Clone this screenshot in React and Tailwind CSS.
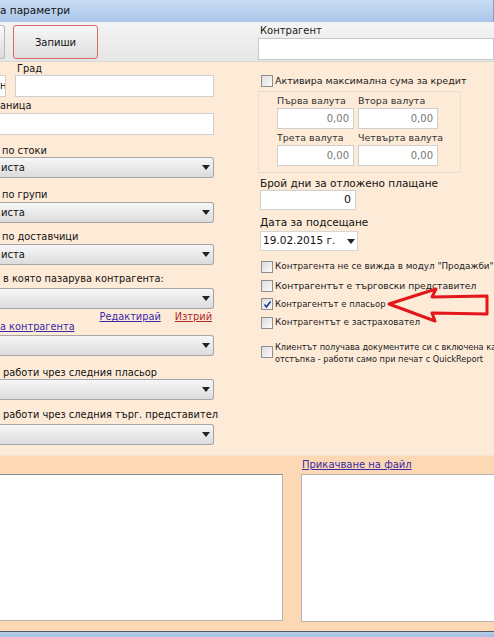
import React from "react"

const font = { fontFamily: '"DejaVu Sans", Verdana, sans-serif' }

function Arrow() {
  return (
    <svg width="8" height="5" viewBox="0 0 8 5"><path d="M0 0 L8 0 L4 5 Z" fill="#222" /></svg>
  )
}

function Select({ text, className = "" }) {
  return (
    <div className={`h-[21px] border border-[#a5a5a5] rounded-[3px] bg-gradient-to-b from-[#f7f7f7] to-[#dcdcdc] flex items-center justify-between pr-[3px] text-[10px] text-[#111] ${className}`}>
      <span className="pl-[1px]">{text}</span>
      <Arrow />
    </div>
  )
}

function Input({ className = "", value }) {
  return (
    <div className={`bg-white border border-[#cfcfcf] flex items-center justify-end pr-[4px] text-[10px] ${className}`}>{value}</div>
  )
}

function Check({ checked }) {
  return (
    <div className="w-[12px] h-[12px] border border-[#8e8f8f] bg-gradient-to-br from-[#dcdcdc] to-[#fbfbfb] flex items-center justify-center shrink-0">
      {checked && (
        <svg width="9" height="9" viewBox="0 0 9 9"><path d="M1.5 4.5 L3.5 7 L7.5 1.5" stroke="#1b3b8c" strokeWidth="1.6" fill="none" /></svg>
      )}
    </div>
  )
}

function CheckRow({ label, checked, className = "" }) {
  return (
    <div className={`flex items-center gap-[2px] h-[12px] text-[#222] ${className}`}>
      <Check checked={checked} />
      <span className="whitespace-nowrap">{label}</span>
    </div>
  )
}

export default function App() {
  return (
    <div className="w-[494px] h-[637px] overflow-hidden bg-[#fdebd8] relative" style={font}>

      {/* title bar */}
      <div className="h-[22px] bg-gradient-to-b from-[#c9dcf2] to-[#a9c6ea] text-[10.5px] text-[#111] pt-[3px] border-r border-[#8aa0bb]">
        а параметри
      </div>

      {/* toolbar */}
      <div className="h-[40px] bg-gradient-to-b from-[#f4f4f4] to-[#e6e6e6] border-b border-[#d7d7d7] flex">
        <div className="w-[250px] shrink-0 flex items-start gap-[8px] pt-[3px]">
          <div className="w-[5px] h-[34px] border border-[#b8b8b8] border-l-0 rounded-r-[3px] bg-gradient-to-b from-[#f9f9f9] to-[#dcdcdc]" />
          <div className="w-[85px] h-[34px] border border-[#d4696c] rounded-[3px] bg-gradient-to-b from-[#f7f7f7] to-[#dedede] flex items-center justify-center text-[10px] text-[#111]">
            Запиши
          </div>
        </div>
        <div className="flex-1 pl-[8px] pt-[3px]">
          <div className="text-[10px] text-[#222] leading-[12px] pl-[2px]">Контрагент</div>
          <div className="h-[22px] bg-white border border-[#c8c8c8] mt-[1px]" />
        </div>
      </div>

      {/* main */}
      <div className="flex h-[393px]">
        {/* left column */}
        <div className="w-[258px] shrink-0 text-[9.8px] text-[#111]">
          <div className="w-[214px]">
            <div className="flex gap-[9px] mt-[1px]">
              <div className="w-[6px]">
                <div className="h-[12px]" />
                <div className="h-[22px] bg-white border border-[#cfcfcf] border-l-0 text-[10px] leading-[20px] overflow-hidden">н</div>
              </div>
              <div className="flex-1">
                <div className="h-[12px] leading-[12px] pl-[2px]">Град</div>
                <div className="h-[22px] bg-white border border-[#cfcfcf]" />
              </div>
            </div>
            <div className="h-[12px] leading-[12px] mt-[3px]">аница</div>
            <div className="h-[22px] bg-white border border-[#cfcfcf] border-l-0 mt-[1px]" />

            <div className="h-[12px] leading-[12px] mt-[10px] pl-[2px]">по стоки</div>
            <Select text="иста" className="mt-[0px] border-l-0 rounded-l-none" />

            <div className="h-[12px] leading-[12px] mt-[11px] pl-[2px]">по групи</div>
            <Select text="иста" className="mt-[1px] border-l-0 rounded-l-none" />

            <div className="h-[12px] leading-[12px] mt-[8px] pl-[2px]">по доставчици</div>
            <Select text="иста" className="mt-[1px] border-l-0 rounded-l-none" />

            <div className="h-[12px] leading-[12px] mt-[8px] pl-[3px]">в която пазарува контрагента:</div>
            <Select text="" className="mt-[3px] border-l-0 rounded-l-none" />

            <div className="flex justify-end gap-[14px] h-[10px] leading-[12px] mt-[2px] pr-[2px]">
              <span className="underline text-[#3a2aa8]">Редактирай</span>
              <span className="underline text-[#b0282a]">Изтрий</span>
            </div>
            <div className="h-[12px] leading-[12px] underline text-[#3a2aa8]">а контрагента</div>
            <Select text="" className="mt-[2px] border-l-0 rounded-l-none" />

            <div className="h-[12px] leading-[12px] mt-[11px] pl-[3px] whitespace-nowrap">работи чрез следния пласьор</div>
            <Select text="" className="mt-[0px] border-l-0 rounded-l-none" />

            <div className="h-[12px] leading-[12px] mt-[9px] pl-[3px] whitespace-nowrap">работи чрез следния търг. представител</div>
            <Select text="" className="mt-[3px] border-l-0 rounded-l-none" />
          </div>
        </div>

        {/* right column */}
        <div className="flex-1 min-w-0 pt-[13px] text-[#111]">
          <CheckRow label="Активира максимална сума за кредит" className="ml-[3px] text-[9.5px]" />

          <div className="w-[203px] h-[82px] border border-[#eedccb] mt-[4px] pl-[18px] pt-[3px] text-[9.5px] text-[#333]">
            <div className="flex">
              <div className="w-[81px]">
                <div className="h-[12px] leading-[12px]">Първа валута</div>
                <Input className="w-[77px] h-[21px] mt-[1px] text-[#777]" value="0,00" />
              </div>
              <div>
                <div className="h-[12px] leading-[12px]">Втора валута</div>
                <Input className="w-[80px] h-[21px] mt-[1px] text-[#777]" value="0,00" />
              </div>
            </div>
            <div className="flex mt-[3px]">
              <div className="w-[81px]">
                <div className="h-[12px] leading-[12px]">Трета валута</div>
                <Input className="w-[77px] h-[21px] mt-[1px] text-[#777]" value="0,00" />
              </div>
              <div>
                <div className="h-[12px] leading-[12px]">Четвърта валута</div>
                <Input className="w-[80px] h-[21px] mt-[1px] text-[#777]" value="0,00" />
              </div>
            </div>
          </div>

          <div className="ml-[2px] mt-[4px] text-[10.5px] h-[12px] leading-[12px]">Брой дни за отложено плащане</div>
          <Input className="ml-[2px] w-[96px] h-[20px] mt-[1px] text-[11px] text-[#111]" value="0" />

          <div className="ml-[2px] mt-[6px] text-[10.5px] h-[12px] leading-[12px]">Дата за подсещане</div>
          <div className="ml-[2px] mt-[3px] w-[98px] h-[20px] bg-white border border-[#d6d6d6] flex items-center justify-between px-[2px] text-[10.5px]">
            <span>19.02.2015 г.</span>
            <Arrow />
          </div>

          <div className="text-[8.8px]">
            <CheckRow label="Контрагента не се вижда в модул &quot;Продажби&quot;" className="ml-[3px] mt-[10px]" />
            <CheckRow label="Контрагентът е търговски представител" className="ml-[3px] mt-[7px] text-[9.2px]" />
            <CheckRow label="Контрагентът е пласьор" checked className="ml-[3px] mt-[6px] text-[8.5px]" />
            <CheckRow label="Контрагентът е застраховател" className="ml-[3px] mt-[7px]" />

            <div className="flex items-start gap-[2px] ml-[3px] mt-[12px] text-[#222] leading-[12px] text-[8.2px]">
              <div className="mt-[5px]"><Check /></div>
              <div className="whitespace-nowrap">
                Клиентът получава документите си с включена ка<br />
                отстъпка - работи само при печат с QuickReport
              </div>
            </div>
          </div>
        </div>
      </div>

      {/* red arrow annotation */}
      <svg className="absolute left-[384px] top-[282px]" width="110" height="44" viewBox="0 0 110 44">
        <path d="M5 22 L52 7 L48 15 L103 14 L103 32 L48 31 L51 39 Z" fill="none" stroke="#e3171b" strokeWidth="3" strokeLinejoin="round" />
      </svg>

      {/* bottom section */}
      <div className="h-[176px] bg-[#fdd8b4] border-t border-[#f3e4d4] flex">
        <div className="w-[283px] shrink-0 pt-[18px]">
          <div className="h-[147px] bg-white border border-[#b9b2ad] border-l-0 border-t-[#8a8f9c]" />
        </div>
        <div className="flex-1 pl-[18px] pt-[3px]">
          <div className="text-[10px] h-[12px] leading-[12px] underline text-[#3a2aa8] pl-[1px]">Прикачване на файл</div>
          <div className="h-[148px] bg-white border border-[#b9b2ad] border-r-0 mt-[3px]" />
        </div>
      </div>

      <div className="h-[1px] bg-[#4c5a6a]" />
      <div className="h-[6px] bg-gradient-to-b from-[#b7cde6] to-[#9ebbe0]" />
    </div>
  )
}
